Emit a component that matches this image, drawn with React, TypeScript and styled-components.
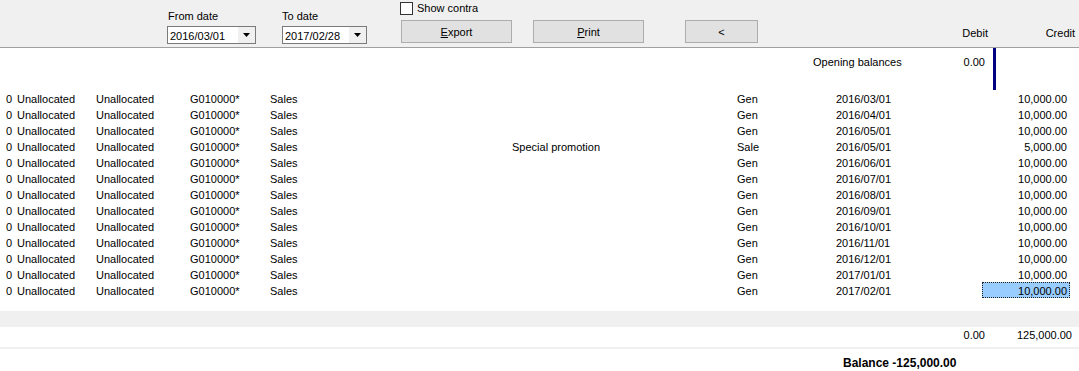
import React from "react";
import styled, { createGlobalStyle } from "styled-components";

const Global = createGlobalStyle`
  html, body { margin: 0; padding: 0; background: #ffffff; }
  body { font-family: "Liberation Sans", Arial, sans-serif; font-size: 11px; color: #000; }
`;

const Page = styled.div`
  width: 1079px;
  height: 371px;
  overflow: hidden;
  background: #fff;
`;

const HeaderBar = styled.div`
  display: flex;
  align-items: flex-start;
  height: 48px;
  box-sizing: border-box;
  background: #f0f0f0;
  border-bottom: 1px solid #a0a0a0;
  padding-left: 167px;
`;

const DateGroup = styled.div<{ $w: number; $lx: number }>`
  width: ${(p) => p.$w}px;
  display: flex;
  flex-direction: column;
  padding-top: 10px;
  & > span {
    line-height: 13px;
    height: 13px;
    padding-left: ${(p) => p.$lx}px;
  }
`;

const Combo = styled.div<{ $w: number }>`
  margin-top: 3px;
  width: ${(p) => p.$w}px;
  height: 18px;
  box-sizing: border-box;
  border: 1px solid #7a7a7a;
  background: #fff;
  display: flex;
  align-items: center;
  padding-left: 2px;
  line-height: 16px;
  & > span { flex: 1; padding-top: 1px; }
`;

const ComboArrow = styled.div`
  width: 17px;
  height: 16px;
  background: #f0f0f0;
  display: flex;
  align-items: center;
  justify-content: center;
`;

const ActionGroup = styled.div`
  width: 358px;
  display: flex;
  flex-direction: column;
`;

const CheckRow = styled.label`
  display: flex;
  align-items: center;
  margin-top: 2px;
  height: 13px;
  line-height: 13px;
`;

const CheckBox = styled.span`
  width: 13px;
  height: 13px;
  box-sizing: border-box;
  border: 1px solid #333;
  background: #fff;
  margin-right: 4px;
`;

const ButtonRow = styled.div`
  display: flex;
  margin-top: 5px;
  padding-left: 1px;
`;

const Button = styled.div<{ $w: number; $gap: number }>`
  width: ${(p) => p.$w}px;
  margin-left: ${(p) => p.$gap}px;
  height: 23px;
  box-sizing: border-box;
  background: #e1e1e1;
  border: 1px solid #adadad;
  display: flex;
  align-items: center;
  justify-content: center;
  line-height: 13px;
  padding-top: 2px;
`;

const ColHeads = styled.div`
  margin-left: auto;
  padding-right: 4px;
  padding-top: 27px;
  display: flex;
`;

const ColHead = styled.div<{ $w: number }>`
  width: ${(p) => p.$w}px;
  text-align: right;
  line-height: 13px;
`;

const OpeningRow = styled.div`
  display: flex;
  height: 42px;
  padding-left: 813px;
`;

const OpenText = styled.div<{ $w: number; $right?: boolean }>`
  width: ${(p) => p.$w}px;
  text-align: ${(p) => (p.$right ? "right" : "left")};
  padding-top: 6px;
  line-height: 16px;
`;

const Splitter = styled.div`
  width: 3px;
  margin-left: 8px;
  background: #000080;
`;

const Rows = styled.div`
  display: flex;
  flex-direction: column;
`;

const Row = styled.div`
  display: grid;
  grid-template-columns: 17px 79px 94px 80px 242px 225px 99px 146px 88px;
  height: 16px;
  line-height: 16px;
  white-space: nowrap;
`;

const Cell = styled.div<{ $align?: "left" | "right" }>`
  text-align: ${(p) => p.$align || "left"};
  padding-right: ${(p) => (p.$align === "right" ? 5 : 0)}px;
  padding-top: 1px;
`;

const AmountCell = styled.div<{ $selected?: boolean }>`
  text-align: right;
  box-sizing: border-box;
  height: 16px;
  padding-right: 2px;
  padding-top: 1px;
  background: ${(p) => (p.$selected ? "#99ccff" : "transparent")};
  border: 1px ${(p) => (p.$selected ? "dotted #222" : "solid transparent")};
  line-height: 14px;
`;

const Spacer = styled.div<{ $h: number }>`
  height: ${(p) => p.$h}px;
`;

const Band = styled.div`
  height: 16px;
  background: #f0f0f0;
`;

const TotalsRow = styled.div`
  display: grid;
  grid-template-columns: 913px 72px 87px;
  height: 16px;
  line-height: 16px;
  & > div { text-align: right; }
`;

const Rule = styled.div`
  height: 2px;
  background: #f0f0f0;
  margin-top: 4px;
`;

const Balance = styled.div`
  padding-left: 843px;
  margin-top: 6px;
  line-height: 16px;
  font-weight: bold;
  font-size: 12px;
  white-space: nowrap;
`;

type Entry = { type: string; date: string; amount: string; desc?: string };

const entries: Entry[] = [
  { type: "Gen", date: "2016/03/01", amount: "10,000.00" },
  { type: "Gen", date: "2016/04/01", amount: "10,000.00" },
  { type: "Gen", date: "2016/05/01", amount: "10,000.00" },
  { type: "Sale", date: "2016/05/01", amount: "5,000.00", desc: "Special promotion" },
  { type: "Gen", date: "2016/06/01", amount: "10,000.00" },
  { type: "Gen", date: "2016/07/01", amount: "10,000.00" },
  { type: "Gen", date: "2016/08/01", amount: "10,000.00" },
  { type: "Gen", date: "2016/09/01", amount: "10,000.00" },
  { type: "Gen", date: "2016/10/01", amount: "10,000.00" },
  { type: "Gen", date: "2016/11/01", amount: "10,000.00" },
  { type: "Gen", date: "2016/12/01", amount: "10,000.00" },
  { type: "Gen", date: "2017/01/01", amount: "10,000.00" },
  { type: "Gen", date: "2017/02/01", amount: "10,000.00" },
];

const Arrow = () => (
  <svg width="7" height="4" viewBox="0 0 7 4">
    <path d="M0 0H7L3.5 4Z" fill="#000" />
  </svg>
);

export default function App() {
  return (
    <Page>
      <Global />
      <HeaderBar>
        <DateGroup $w={115} $lx={1}>
          <span>From date</span>
          <Combo $w={89}>
            <span>2016/03/01</span>
            <ComboArrow>
              <Arrow />
            </ComboArrow>
          </Combo>
        </DateGroup>
        <DateGroup $w={118} $lx={0}>
          <span>To date</span>
          <Combo $w={85}>
            <span>2017/02/28</span>
            <ComboArrow>
              <Arrow />
            </ComboArrow>
          </Combo>
        </DateGroup>
        <ActionGroup>
          <CheckRow>
            <CheckBox />
            Show contra
          </CheckRow>
          <ButtonRow>
            <Button $w={111} $gap={0}>
              <span>
                <u>E</u>xport
              </span>
            </Button>
            <Button $w={111} $gap={21}>
              <span>
                <u>P</u>rint
              </span>
            </Button>
            <Button $w={73} $gap={41}>
              &lt;
            </Button>
          </ButtonRow>
        </ActionGroup>
        <ColHeads>
          <ColHead $w={80}>Debit</ColHead>
          <ColHead $w={87}>Credit</ColHead>
        </ColHeads>
      </HeaderBar>

      <OpeningRow>
        <OpenText $w={100}>Opening balances</OpenText>
        <OpenText $w={72} $right>
          0.00
        </OpenText>
        <Splitter />
      </OpeningRow>

      <Rows>
        {entries.map((e, i) => (
          <Row key={i}>
            <Cell $align="right">0</Cell>
            <Cell>Unallocated</Cell>
            <Cell>Unallocated</Cell>
            <Cell>G010000*</Cell>
            <Cell>Sales</Cell>
            <Cell>{e.desc || ""}</Cell>
            <Cell>{e.type}</Cell>
            <Cell>{e.date}</Cell>
            <AmountCell $selected={i === entries.length - 1}>{e.amount}</AmountCell>
          </Row>
        ))}
      </Rows>

      <Spacer $h={13} />
      <Band />
      <TotalsRow>
        <div />
        <div>0.00</div>
        <div>125,000.00</div>
      </TotalsRow>
      <Rule />
      <Balance>Balance -125,000.00</Balance>
    </Page>
  );
}
